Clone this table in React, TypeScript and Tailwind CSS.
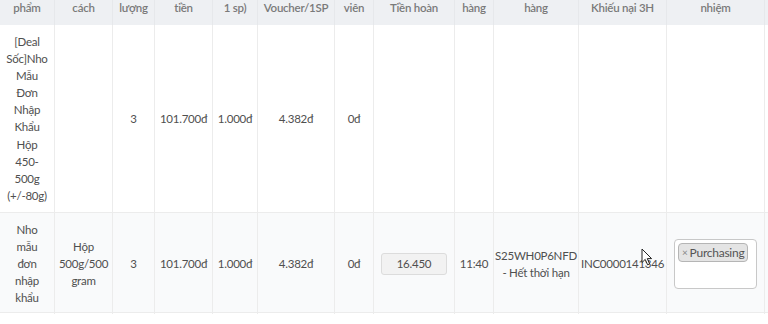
import React from "react";

const cols =
  "grid-cols-[55px_58px_42px_58px_45px_77px_39px_81px_39px_85px_88px_98px_1fr]";

const headers = [
  "phẩm",
  "cách",
  "lượng",
  "tiền",
  "1 sp)",
  "Voucher/1SP",
  "viên",
  "Tiền hoàn",
  "hàng",
  "hàng",
  "Khiếu nại 3H",
  "nhiệm",
  "",
];

function Lines({ lines }: { lines: string[] }) {
  return (
    <>
      {lines.map((l, i) => (
        <span key={i} className="block whitespace-nowrap">
          {l}
        </span>
      ))}
    </>
  );
}

function Cell({ children, last }: { children?: React.ReactNode; last?: boolean }) {
  return (
    <div
      className={`flex items-center justify-center px-1 py-2 text-center ${
        last ? "" : "border-r border-[#ececec]"
      }`}
    >
      <div>{children}</div>
    </div>
  );
}

function Cursor() {
  return (
    <svg
      className="absolute left-[641px] top-[248px]"
      width="12"
      height="18"
      viewBox="0 0 12 18"
    >
      <path
        d="M1 1 L1 14.5 L4.2 11.4 L6.6 16.8 L8.6 15.9 L6.3 10.6 L10.6 10.6 Z"
        fill="#fff"
        stroke="#222"
        strokeWidth="1"
        strokeLinejoin="round"
      />
    </svg>
  );
}

export default function App() {
  return (
    <div
      className="relative h-[324px] w-[768px] overflow-hidden bg-white text-[11.5px] leading-[17.1px] tracking-[-0.25px] text-[#4f4f4f]"
      style={{ fontFamily: "Lato, 'Noto Sans', sans-serif" }}
    >
      {/* header */}
      <div className={`grid ${cols} h-[25px] bg-[#eef0f3]`}>
        {headers.map((h, i) => (
          <div
            key={i}
            className={`flex items-start justify-center text-center font-semibold text-[#7a7a7a] ${
              i < headers.length - 1 ? "border-r border-[#e6e8eb]" : ""
            }`}
          >
            <span className="mt-[-1px] whitespace-nowrap">{h}</span>
          </div>
        ))}
      </div>

      {/* row 1 */}
      <div className={`grid ${cols} border-b border-[#ececec] bg-white`}>
        <Cell>
          <Lines
            lines={[
              "[Deal",
              "Sốc]Nho",
              "Mẫu",
              "Đơn",
              "Nhập",
              "Khẩu",
              "Hộp",
              "450-",
              "500g",
              "(+/-80g)",
            ]}
          />
        </Cell>
        <Cell />
        <Cell>3</Cell>
        <Cell>101.700đ</Cell>
        <Cell>1.000đ</Cell>
        <Cell>4.382đ</Cell>
        <Cell>0đ</Cell>
        <Cell />
        <Cell />
        <Cell />
        <Cell />
        <Cell />
        <Cell last />
      </div>

      {/* row 2 */}
      <div className={`grid ${cols} h-[100px] border-b border-[#ececec] bg-[#f9fafb]`}>
        <Cell>
          <Lines lines={["Nho", "mẫu", "đơn", "nhập", "khẩu"]} />
        </Cell>
        <Cell>
          <Lines lines={["Hộp", "500g/500", "gram"]} />
        </Cell>
        <Cell>3</Cell>
        <Cell>101.700đ</Cell>
        <Cell>1.000đ</Cell>
        <Cell>4.382đ</Cell>
        <Cell>0đ</Cell>
        <div className="flex items-center border-r border-[#ececec] px-[7px]">
          <div className="flex h-[22px] w-full items-center justify-center rounded-[3px] border border-[#dcdcdc] bg-[#f2f2f2]">
            16.450
          </div>
        </div>
        <Cell>11:40</Cell>
        <Cell>
          <Lines lines={["S25WH0P6NFD", "- Hết thời hạn"]} />
        </Cell>
        <Cell>INC0000141346</Cell>
        <div className="flex items-center border-r border-[#ececec] px-[7px]">
          <div className="h-[50px] w-full rounded-[4px] border border-[#c8c8c8] bg-white px-[3px] pt-[3px]">
            <span className="inline-flex h-[19px] items-center gap-[2px] rounded-[4px] border border-[#b5b5b5] bg-[#e4e4e4] px-[3px] text-[12px] text-[#555]">
              <span className="text-[10px] text-[#888]">×</span>
              Purchasing
            </span>
          </div>
        </div>
        <Cell last />
      </div>

      <Cursor />
    </div>
  );
}
